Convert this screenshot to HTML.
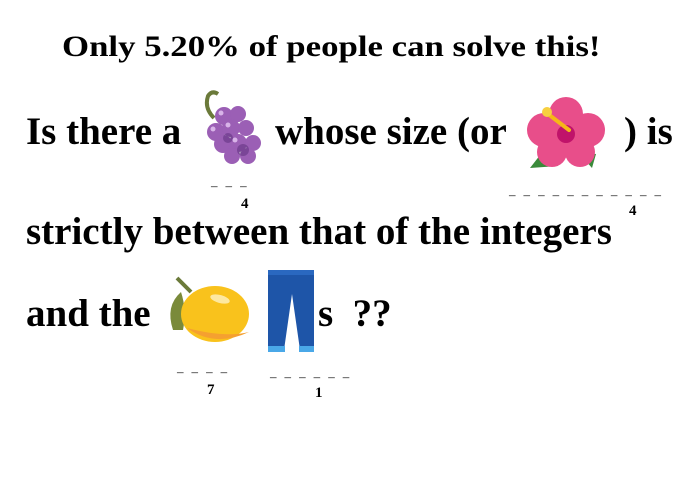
<!DOCTYPE html>
<html><head><style>
body{margin:0;width:700px;height:500px;background:#fff;position:relative;overflow:hidden;font-family:"Liberation Serif",serif;font-weight:bold;color:#000}
.t{position:absolute;white-space:nowrap;line-height:1;transform-origin:left top}
.big{font-size:39px}
.d{position:absolute;font-size:13px;letter-spacing:2.4px;line-height:1;white-space:nowrap;font-weight:normal}
.n{position:absolute;font-size:15px;line-height:1}
svg{position:absolute}
</style></head><body>
<div class="t" style="left:62px;top:32px;font-size:30px;transform:scaleX(1.16)">Only 5.20% of people can solve this!</div>
<div class="t big" style="left:26px;top:112px">Is there a</div>
<div class="t big" style="left:275px;top:112px">whose size (or</div>
<div class="t big" style="left:624px;top:112px">) is</div>
<div class="t big" style="left:26px;top:212px">strictly between that of the integers</div>
<div class="t big" style="left:26px;top:294px">and the</div>
<div class="t big" style="left:318px;top:294px">s&nbsp; ??</div>

<div class="d" style="left:211px;top:179px">– – –</div>
<div class="n" style="left:241px;top:197px">4</div>
<div class="d" style="left:509px;top:188px">– – – – – – – – – – –</div>
<div class="n" style="left:629px;top:204px">4</div>
<div class="d" style="left:177px;top:365px">– – – –</div>
<div class="n" style="left:207px;top:383px">7</div>
<div class="d" style="left:270px;top:370px">– – – – – –</div>
<div class="n" style="left:315px;top:386px">1</div>

<!-- grapes -->
<svg style="left:198px;top:88px" width="72" height="80" viewBox="0 0 72 80">
<path d="M16 30 Q6 20 10 8 Q14 2 20 6" stroke="#6b7a3a" stroke-width="4" fill="none"/>
<g fill="#9b5fb5">
<circle cx="26" cy="28" r="9"/><circle cx="40" cy="26" r="8"/><circle cx="18" cy="44" r="9"/>
<circle cx="33" cy="40" r="9"/><circle cx="48" cy="40" r="8"/><circle cx="25" cy="56" r="9"/>
<circle cx="40" cy="55" r="9"/><circle cx="55" cy="55" r="8"/><circle cx="34" cy="68" r="8"/><circle cx="50" cy="68" r="8"/>
</g>
<g fill="#5a2c7a" opacity=".5"><circle cx="45" cy="62" r="6"/><circle cx="30" cy="50" r="5"/></g>
<g fill="#d8b4e8"><circle cx="23" cy="25" r="2.5"/><circle cx="30" cy="37" r="2.5"/><circle cx="15" cy="41" r="2.5"/><circle cx="37" cy="52" r="2.5"/></g>
</svg>
<!-- hibiscus -->
<svg style="left:524px;top:94px" width="86" height="80" viewBox="0 0 86 80">
<path d="M6 74 L20 56 L34 72Z M54 58 L72 60 L68 74Z" fill="#3a8a3a"/>
<g fill="#e84e8a">
<circle cx="42" cy="20" r="17"/><circle cx="20" cy="36" r="17"/><circle cx="64" cy="36" r="17"/>
<circle cx="28" cy="58" r="15"/><circle cx="56" cy="58" r="15"/><circle cx="42" cy="42" r="18"/>
</g>
<circle cx="42" cy="40" r="9" fill="#c0136a"/>
<path d="M45 36 L24 20" stroke="#f5b818" stroke-width="4" stroke-linecap="round"/>
<circle cx="23" cy="18" r="5" fill="#f7d040"/>
</svg>
<!-- lemon -->
<svg style="left:165px;top:276px" width="86" height="72" viewBox="0 0 86 72">
<path d="M8 54 Q0 30 16 16 Q22 34 18 54Z" fill="#7a8a3a"/>
<path d="M12 2 L26 16" stroke="#6b7a3a" stroke-width="4"/>
<ellipse cx="50" cy="38" rx="34" ry="28" fill="#f9c21c"/>
<path d="M22 52 Q50 72 84 56 Q60 62 22 52Z" fill="#f5a030"/>
<ellipse cx="55" cy="23" rx="10" ry="4" fill="#fde8a0" transform="rotate(15 55 23)"/>
</svg>
<!-- jeans -->
<svg style="left:266px;top:268px" width="52" height="88" viewBox="0 0 52 88">
<path d="M2 2 H48 V82 H34 L26 26 L18 82 H2Z" fill="#1e55a8"/>
<rect x="2" y="2" width="46" height="5" fill="#2a68c0"/>
<rect x="2" y="78" width="17" height="6" fill="#4aa8e8"/>
<rect x="33" y="78" width="15" height="6" fill="#4aa8e8"/>
</svg>
</body></html>
